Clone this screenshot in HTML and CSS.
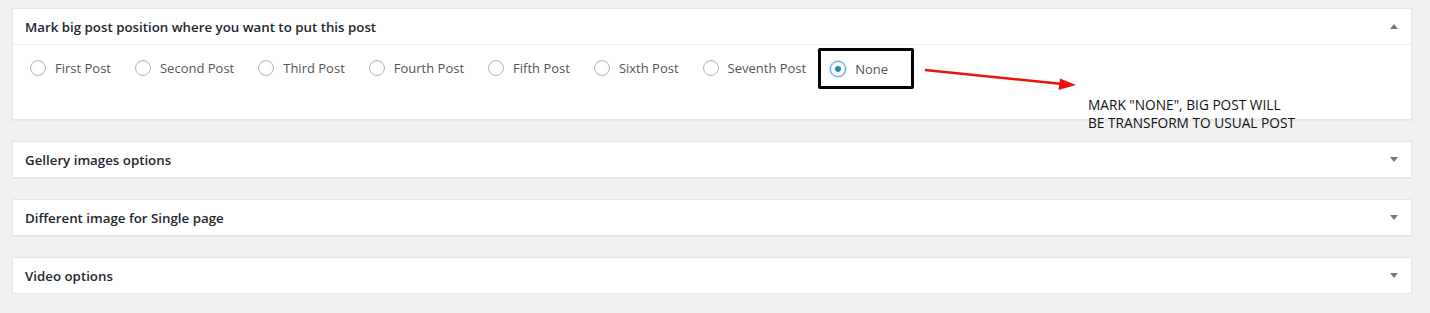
FILE: index.html
```html
<!DOCTYPE html>
<html lang="en">
<head>
    <meta charset="UTF-8">
    <title>Post options</title>
    <link rel="stylesheet" href="styles.css">
</head>
<body>
    <div class="boxes">
        <div class="postbox open">
            <div class="postbox-head">
                <h2>Mark big post position where you want to put this post</h2>
                <span class="toggle up"></span>
            </div>
            <div class="postbox-body">
                <label class="radio"><span class="dot"></span>First Post</label>
                <label class="radio"><span class="dot"></span>Second Post</label>
                <label class="radio"><span class="dot"></span>Third Post</label>
                <label class="radio"><span class="dot"></span>Fourth Post</label>
                <label class="radio"><span class="dot"></span>Fifth Post</label>
                <label class="radio"><span class="dot"></span>Sixth Post</label>
                <label class="radio"><span class="dot"></span>Seventh Post</label>
                <label class="radio checked marked"><span class="dot"></span>None</label>
            </div>
            <svg class="arrow" width="170" height="30" viewBox="0 0 170 30">
                <line x1="2" y1="4" x2="140" y2="18" stroke="#e8140f" stroke-width="2.6" />
                <polygon points="153,19 137,12.5 135.5,24" fill="#e8140f" />
            </svg>
            <p class="note">MARK "NONE", BIG POST WILL<br>BE TRANSFORM TO USUAL POST</p>
        </div>
        <div class="postbox">
            <div class="postbox-head">
                <h2>Gellery images options</h2>
                <span class="toggle"></span>
            </div>
        </div>
        <div class="postbox">
            <div class="postbox-head">
                <h2>Different image for Single page</h2>
                <span class="toggle"></span>
            </div>
        </div>
        <div class="postbox">
            <div class="postbox-head">
                <h2>Video options</h2>
                <span class="toggle"></span>
            </div>
        </div>
    </div>
</body>
</html>
```

FILE: styles.css
```css
body {
    margin: 0;
    background: #f1f1f1;
    font-family: 'Open Sans', 'Noto Sans', Arial, sans-serif;
    color: #444;
}
.boxes {
    padding: 8px 18px 0 12px;
    display: flex;
    flex-direction: column;
    gap: 21px;
}
.postbox {
    position: relative;
    background: #fff;
    border: 1px solid #e5e5e5;
    box-shadow: 0 1px 1px rgba(0, 0, 0, 0.04);
}
.postbox-head {
    height: 35px;
    display: flex;
    align-items: center;
    justify-content: space-between;
    padding: 0 13px 0 12px;
}
.open .postbox-head {
    border-bottom: 1px solid #eee;
}
.postbox-head h2 {
    margin: 0;
    font-size: 13.3px;
    font-weight: 600;
    color: #23282d;
}
.toggle {
    width: 0;
    height: 0;
    border-left: 4.5px solid transparent;
    border-right: 4.5px solid transparent;
    border-top: 5px solid #72777c;
}
.toggle.up {
    border-top: 0;
    border-bottom: 5px solid #72777c;
}
.postbox-body {
    height: 74px;
    display: flex;
    align-items: flex-start;
    padding: 14px 0 0 17px;
    box-sizing: border-box;
}
.radio {
    display: flex;
    align-items: center;
    font-size: 13px;
    color: #555;
    margin-right: 24px;
    height: 18px;
}
.dot {
    width: 14px;
    height: 14px;
    border: 1px solid #b4b9be;
    border-radius: 50%;
    margin-right: 9px;
    box-shadow: inset 0 1px 2px rgba(0, 0, 0, 0.07);
    display: flex;
    align-items: center;
    justify-content: center;
}
.checked .dot::after {
    content: "";
    width: 6px;
    height: 6px;
    border-radius: 50%;
    background: #1e8cbe;
}
.checked .dot {
    border-color: #5b9dd9;
    box-shadow: 0 0 2px rgba(30, 140, 190, 0.8);
}
.marked {
    border: 3px solid #000;
    padding: 0 23px 0 9px;
    margin: -11px 0 0 -12px;
    height: 41px;
    box-sizing: border-box;
    border-radius: 2px;
}
.arrow {
    position: absolute;
    left: 910px;
    top: 57px;
}
.note {
    position: absolute;
    left: 1075px;
    top: 87px;
    margin: 0;
    font-size: 13.7px;
    line-height: 18px;
    color: #111;
}
```
